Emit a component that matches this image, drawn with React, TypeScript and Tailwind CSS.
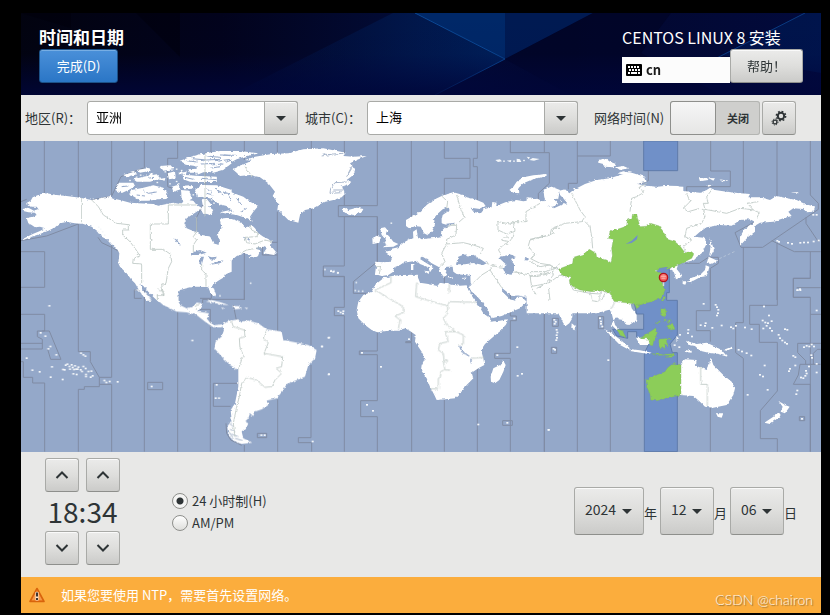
import { useState, type ReactNode } from "react";

const FONT = "font-['Noto_Sans_CJK_SC','Noto_Sans',sans-serif]";
const RAISED =
  "rounded-[3px] border border-[#a9aaa7] border-b-[#8e8f8c] bg-linear-to-b from-[#ebebea] via-[#dededc] to-[#cbcbc9] shadow-[inset_0_1px_0_#fafafa] text-[#2e3436]";

/* The map is drawn in tiles at three units per pixel; each tile has its own origin. */
function Tile({ x, y, children }: { x: number; y: number; children: ReactNode }) {
  return <g transform={`translate(${x} ${y}) scale(0.33333)`}>{children}</g>;
}

function Dots({ at, size = 5 }: { at: number[][]; size?: number }) {
  return (
    <>
      {at.map(([x, y], i) => (
        <rect key={i} x={x - size / 2} y={y - size / 2} width={size} height={size - 1} />
      ))}
    </>
  );
}

function SeaLines() {
  return (
    <g fill="none" stroke="#7f8ca4" strokeWidth="3">
      <Tile x={20} y={140}>
        <path d="M73,3V160M175,3V172M175,250V480M275,3V165M275,315V480M373,3V83L303,110L275,168L215,180M473,3V55H443V140L458,145M573,3V40M3,335H74V442H3M3,302L80,288L175,252M3,185L20,178M343,450V475H365M343,450H362M556,38V180L530,232V270M234,292L245,308L275,322L298,335" />
      </Tile>
      <Tile x={200} y={140}>
        <path d="M133,3V60M133,335V480M232,3V45M232,215V480M215,307H232M187,320V345H232M334,3V28M334,205V480M433,3V40M433,165V197M532,3V197H415V230H532V365M433,230V378H370V409H433V480M34,445V475H0" />
      </Tile>
      <Tile x={350} y={140}>
        <path d="M82,230V365L10,425V460H60M184,3V235M283,3V55H360V115H283V165M382,3V55H370V80H382V180M481,3V38H598V130L565,160V180M583,3V38M283,395V430" />
      </Tile>
      <Tile x={530} y={140}>
        <path d="M142,3V130H115V148M142,48H241V3M355,92V122L300,142" />
      </Tile>
      <Tile x={660} y={140}>
        <path d="M152,3V93H211V140H80V160M250,3V160M351,3V168M451,3V165L475,190V208L308,322H243L225,278L295,240M438,232V250L475,305M335,302L403,335H482M451,335V415H400V472H451M410,443H482M250,322V480M351,310V480M75,370H118L145,352H175V370L151,385V480" />
      </Tile>
      <Tile x={20} y={290}>
        <path d="M3,73H74V123H52V140L67,148V177H3M67,123H88L123,208H92L83,178M3,160H67M3,215H10V262H38V279H74V485M175,0V185H211V215L238,262H275V0M238,262V290H193V298H175V485M238,283H275V485M373,0V485M473,65V485M548,40V28H673V0M540,58H571V280V485M655,280H580V349H632M673,465V485M640,45L650,95M773,0V123M773,328V485M873,0V165M873,225V443H835V458H875V485M383,277H428V299H383ZM712,430H740V443H712ZM618,400L620,430L632,450L665,466" />
      </Tile>
      <Tile x={320} y={270}>
        <path d="M10,0V20H73V112H43V137H73V545M172,187V243H118V254H172V392H122V440H172V545M275,185V215H257V218H275V545M373,390V545M472,295V545M571,60V138H589V152H571V250H524V265H571V545M548,452H577V466H548ZM673,85V545M697,145H715V169H697ZM694,232H710V250H694Z" />
      </Tile>
      <Tile x={540} y={270}>
        <path d="M13,85V545M112,110V545M175,140H191V176H175ZM211,180V545M511,0V122H469V182H511V215M511,405V545M610,0V158H587V248L610,265V545M712,0V106H629V163H658V217H712V363L661,422V506H712V545M811,0V25H760V82H811V545M811,133H843M843,220H773V248L797,272V283M843,238H832L820,250V283M780,283H842M780,283L775,315L760,343H811V545M778,440H794V452H778Z" />
      </Tile>
    </g>
  );
}

function Highlight() {
  return (
    <g fill="#7090c8" stroke="#5f7baa" strokeWidth="3">
      <Tile x={530} y={140}>
        <path d="M341,3H443V92H341Z" />
      </Tile>
      <Tile x={540} y={270}>
        <path d="M388,-15V68H380V91H412V195L390,222L397,248H412V545H313V250L325,225L290,202V185H263V205L230,198L218,178H311V132H290L283,100L330,90L350,60L350,-25L370,-20Z" />
      </Tile>
    </g>
  );
}

function Land() {
  return (
    <g fill="#fff" filter="url(#coast)">
      <Tile x={20} y={140}>
        <path d="M8,207L25,203L42,212L55,207L50,200L32,200L18,190L32,182L38,172L60,163L80,160L110,165L140,168L180,173L215,180L240,175L272,168L275,175L300,180L330,188L355,190L400,192L415,197L440,192L460,188L480,192L500,180L520,182L530,195L545,203L530,215L515,225L500,235L493,250L500,265L525,275L545,285L570,290L580,310L595,315L600,300L590,285L605,265L600,240L610,235L635,235V395L612,405L600,415L590,425L580,432L575,440L585,455L588,465L580,468L572,455L565,442L550,440L520,440L500,445L480,450L475,460V485H415L400,470L385,455L370,438L362,432L365,450L380,465L395,482H380L360,455L345,430L335,420L320,400L300,380L295,370L298,340L290,325L275,315L260,298L245,290L235,275L215,260L190,252L165,250L140,246L120,250L105,262L85,272L60,282L35,290L10,300L8,297L40,281L60,273L75,265L60,260L45,262L35,255L25,250L20,235L40,230L50,225L45,218L25,217L10,213Z" />
        <path d="M297,128L340,128L345,138L330,148L304,160L286,150ZM335,150L370,143L400,136L430,143L442,160L440,177L415,178L385,182L360,182L345,172L328,162ZM310,105L340,96L352,102L320,112ZM350,90L388,84L392,92L360,98ZM340,118L370,110L410,103L422,116L390,125L350,125ZM443,100L465,94L467,115L447,118ZM420,78L452,76L462,88L430,92ZM455,140L475,134L482,148L460,155ZM483,150L507,152L517,175L500,190L485,178ZM488,104L540,108L590,110V125L550,126L510,125L490,118ZM480,62L520,48L570,38L635,33V70L610,90L580,98L550,92L540,80L500,74ZM525,150L545,135L590,136L635,150V172L600,168L560,174L530,165ZM545,178L560,176L575,195L560,205L548,195ZM475,98L500,95L498,103L480,104ZM505,88L535,86L540,98L510,98ZM378,104L400,98L395,110ZM540,205L570,205L578,218L550,222ZM412,118L436,114L434,122ZM490,137L518,135L520,146L495,148Z" />
      </Tile>
      <Tile x={200} y={140}>
        <path d="M65,240L80,233L105,240L125,250L140,265L155,255L165,265L175,280L190,290L205,297L215,305L213,318L230,338L222,345L190,340L200,325L190,320L160,325L180,330L172,350L145,355L155,345L130,340L110,348L85,370L80,385L70,400L75,410L62,418L50,425L40,430L35,440L45,460L40,468L30,455L25,440L0,440V285L30,290L40,312L55,315L62,300L50,285L65,265Z" />
        <path d="M-10,45L60,33L120,33L175,40L140,48L110,58L90,68L60,88L40,95L10,97L-10,105ZM-10,150L20,138L50,140L90,155L130,170L150,185L175,198L160,215L150,230L155,245L140,235L110,225L85,222L60,217L90,210L80,198L55,192L40,178L10,170L-10,172ZM5,200L20,195L40,210L30,225L10,218ZM-10,112L50,112L50,125L-10,125Z" />
        <path d="M98,88L120,78L155,62L135,60L165,50L215,42L265,40L310,28L370,25L437,38L430,48L460,50L500,48L470,60L450,70L465,90L460,105L440,120L455,130L425,140L437,160L425,172L400,180L370,187L340,205L315,210L300,225L295,248L285,245L265,240L245,220L232,210L235,190L218,168L225,155L205,130L180,112L150,105L120,108L110,98ZM425,208L440,204L445,210L470,203L490,207L485,217L460,225L435,218Z" />
      </Tile>
      <Tile x={350} y={140}>
        <path d="M90,265L105,262L112,270L108,280L120,292L130,305L145,312L130,320L98,322L110,315L100,308L110,302L95,285ZM67,295L80,287L93,292L88,308L68,312Z" />
        <path d="M75,365L100,367L120,365L127,350L105,335L120,332L125,326L145,322L160,308L178,298L190,295L189,275L200,268L203,290L215,298L240,295L265,293L277,290L273,275L285,262L300,258L275,250L275,238L278,225L300,210L290,203L278,208L262,222L248,240L255,255L245,275L232,285L222,280L212,260L195,258L180,267L168,258V240L185,230L210,215L230,195L250,180L275,168L290,162L310,157L340,165L350,172L375,178L400,188L407,198L390,207L362,203L370,215L390,220L400,208L425,202L427,186L440,188L438,198L470,185L500,180L520,184L545,180L538,172L565,178L570,187L600,177L640,195V480L600,478L585,475L560,468L520,470L505,465L485,468L470,455L455,443L455,455L470,475L480,482H400L365,440L375,405L360,407L320,402L310,395L308,380L290,380L283,390L292,405L280,410L272,395L265,380L245,370L230,358L218,350L210,357L230,370L250,382L240,397L235,382L210,372L200,362L180,365L160,368L150,375L133,382L130,395L115,405L95,408L75,402L78,380Z" />
        <path d="M590,103L588,108L550,117L520,130L505,145L508,160L490,158L478,150L490,140L500,125L520,112L550,106ZM580,150L605,140L630,150L622,190L600,200L585,175ZM293,411L310,412L308,416L293,415ZM335,415L350,412L345,417ZM238,394L222,392L236,402ZM183,372L190,372L190,390L183,390Z" />
      </Tile>
      <Tile x={530} y={140}>
        <path d="M-10,172L25,178L50,190L60,200L85,198L92,182L110,188L100,175L90,165L88,152L105,148L118,160L130,150L165,132L200,120L240,115L270,105L300,97L345,110L350,125L320,132L350,137L380,140L410,138L460,140V330L410,380L380,380L390,430L360,475L200,520H-10Z" />
        <path d="M205,60L225,54L240,65L258,72L250,82L225,80L220,72L205,68ZM258,82L280,78L295,85L270,90ZM262,100L280,94L300,98L290,106ZM0,110L48,102L50,107L0,120ZM40,150L65,140L75,150L80,185L45,182Z" />
      </Tile>
      <Tile x={660} y={140}>
        <path d="M-5,142L25,137L55,138L65,152L90,155L120,158L140,150L150,143L165,150L200,155L240,160L270,162L265,172L300,172L330,180L350,168L380,175L410,180L435,192L465,200L460,215L440,217L430,207L400,205L385,215L395,228L370,235L340,245L300,248L285,257L285,275L265,290L240,317V290L255,265L285,245L270,238L240,240L215,257L180,255L140,262L120,275L103,290L130,293L138,300L138,315L125,340L95,362L60,370L-5,310ZM28,387L55,372L50,387L60,400L65,412L48,418L42,397Z" />
        <path d="M148,295L155,308L162,330L152,348L148,345L152,320ZM146,350L172,362L155,372L140,370ZM137,376L148,380L145,392L140,408L120,412L100,422L80,425L95,413L120,405L135,390ZM68,424L80,424L76,434L68,432ZM85,424L97,420L93,428ZM116,112L140,112L145,120L120,124ZM145,114L165,115L160,122ZM178,118L205,122L190,124ZM138,134L158,136L145,140ZM393,158L416,156L410,161Z" />
      </Tile>
      <Tile x={20} y={290}>
        <path d="M380,-5H475V30L480,45L500,55L520,50L530,38L548,40L535,65L567,70L560,85L570,98L585,105L607,103L605,112L580,112L555,95L530,75L500,67L470,65L430,45L400,20ZM345,-2L365,-2L380,10L396,28L380,20L370,8ZM572,-5L582,-5L588,18L580,15ZM558,35L575,30L600,36L627,45L605,44L580,38ZM636,48L655,48L667,55L645,58ZM603,53L613,54L608,57ZM673,53L685,54L680,57Z" />
        <path d="M605,105L625,93L655,88L660,95L685,92L715,100L740,118L785,125L790,150L830,158L865,165L890,180L885,205L865,225L855,260L830,270L800,282L790,300L770,325L740,332L745,345L725,358L705,365L700,378L690,370L685,385L675,395L685,400L680,412L665,425L670,445L697,458L665,462L640,452L625,435L622,410L635,390L632,360L645,340L655,290V240L630,225L610,205L583,175L587,155L605,140L612,120Z" />
      </Tile>
      <Tile x={320} y={270}>
        <path d="M190,25L215,18L245,15L290,14L297,30L300,38L325,42L352,48L360,38L385,43L420,47L440,46L445,60L460,85L475,105L490,130L510,145L512,155L540,152L563,148L560,160L545,180L520,200L495,222L483,240L490,265L493,285L475,295L455,308L460,325L440,345L425,365L405,385L375,388L350,390L343,375L330,350L320,325L303,300L305,285L315,265L305,245L285,215L287,195L270,183L255,175L235,182L205,182L172,187L155,180L135,165L115,145L110,120L115,95L130,75L155,65L165,45ZM550,272L557,285L550,305L538,330L525,340L513,335L512,320L520,295L540,285Z" />
        <path d="M452,62L448,48L465,30L530,10L545,52L547,65L570,88L582,92L592,80L605,80L620,95L600,115L575,125L545,138L515,145L505,125L490,100L470,78ZM450,-5H725V128L712,125L708,100L695,103L680,85L635,78L575,76L560,62L545,50L480,40L452,40Z" />
      </Tile>
      <Tile x={540} y={270}>
        <path d="M-10,-5H300V80L285,93L272,102L275,115L290,135V150L268,165L256,162L250,150L236,148L228,142L222,150L225,165L238,178L230,180L215,165L220,150L215,130L208,118L195,120L183,105L175,95L150,95L140,100L120,110L97,125V145L88,160L78,167L70,160L55,130L45,100L30,95L20,80L-10,75ZM95,160L108,170L101,180L94,174Z" />
        <path d="M195,178L215,190L245,212L270,235L264,238L240,225L215,200ZM268,237L300,241L335,248L325,252L270,243ZM288,203L328,203L332,225L300,225ZM438,212L470,222L500,218L522,228L545,240L562,260L535,252L505,248L480,242L465,228L445,224ZM550,240L575,230L578,235L560,242ZM409,198L416,205L410,215ZM432,240L455,242L455,248L436,246Z" />
        <path d="M420,285L435,268L470,270L468,287L500,300L506,290L512,262L520,285L535,300L550,315L575,335L585,355L580,375L560,405L520,413L495,410L480,395L474,390L460,378L420,375ZM528,430L550,430L545,443L533,440ZM715,392L735,405L749,410L735,430L722,425L728,410ZM716,429L722,438L690,462L673,458L700,440Z" />
      </Tile>
    </g>
  );
}

function SmallIslands() {
  return (
    <g fill="#f4f7fa">
      <Tile x={20} y={290}>
        <Dots
          size={6}
          at={[[62, 129], [76, 139], [91, 170], [85, 177], [109, 195], [20, 205], [37, 241], [59, 246], [92, 262], [96, 231], [129, 239], [128, 269], [88, 48], [183, 190], [190, 195], [196, 199], [253, 272], [259, 278], [269, 275], [293, 276], [395, 290], [590, 285], [587, 325], [597, 325], [517, 152], [927, 143], [906, 170], [926, 254], [724, 436], [734, 436], [878, 455]]}
        />
        <Dots
          size={6}
          at={[[137, 226], [142, 223], [148, 230], [155, 225], [158, 233], [165, 228], [168, 238], [175, 232], [182, 240], [190, 230], [186, 245], [197, 236], [205, 245], [160, 252], [170, 254], [198, 254], [198, 260], [212, 262], [218, 258], [150, 238], [173, 238], [214, 244], [134, 240], [162, 239]]}
        />
      </Tile>
      <Tile x={20} y={140}>
        <Dots at={[[428, 82], [436, 96], [470, 88], [485, 92], [350, 112], [362, 106], [412, 128], [470, 125], [476, 132], [450, 132], [330, 122], [520, 165], [575, 180], [582, 190], [236, 262], [242, 268], [248, 276], [238, 280], [254, 286]]} />
      </Tile>
      <Tile x={200} y={140}>
        <Dots at={[[152, 430], [375, 389], [394, 393], [402, 394], [413, 399], [469, 428], [466, 452], [476, 454], [488, 454], [60, 468]]} />
      </Tile>
      <Tile x={320} y={270}>
        <Dots
          size={6}
          at={[[55, 124], [62, 128], [69, 131], [70, 124], [26, 204], [6, 230], [27, 313], [126, 249], [183, 291], [141, 405], [159, 423], [267, 208], [583, 146], [592, 232], [532, 256], [593, 318], [606, 312], [475, 464], [562, 459], [686, 480], [703, 150], [707, 156], [704, 162], [701, 237], [705, 240], [710, 180], [712, 188], [710, 196], [711, 204], [709, 211], [33, 4], [40, 6], [54, 9]]}
        />
      </Tile>
      <Tile x={540} y={270}>
        <Dots
          size={6}
          at={[[491, 102], [527, 105], [531, 112], [535, 120], [534, 130], [531, 137], [482, 166], [497, 160], [495, 168], [517, 174], [545, 167], [573, 172], [580, 176], [588, 168], [615, 173], [635, 178], [672, 110], [687, 137], [668, 152], [676, 158], [684, 160], [695, 154], [680, 168], [690, 175], [696, 183], [670, 176], [735, 178], [742, 180], [716, 195], [720, 205], [727, 212], [735, 218], [741, 222], [830, 122], [445, 180], [444, 190], [456, 200], [420, 195], [404, 226], [418, 232], [596, 240], [606, 245], [620, 250], [634, 257], [660, 315], [669, 320], [674, 287], [683, 360], [623, 375], [772, 362], [769, 373], [786, 447], [760, 258], [766, 262], [750, 297], [747, 304], [766, 287], [792, 232], [800, 228], [808, 230], [815, 224], [822, 230], [814, 256], [816, 264], [830, 282], [798, 303], [800, 311], [796, 318], [790, 325], [783, 323], [830, 308], [807, 290], [26, 480], [205, 271], [180, 145], [183, 155], [187, 170], [183, 162], [780, 58], [773, 61]]}
        />
      </Tile>
      <Tile x={660} y={140}>
        <Dots
          size={6}
          at={[[352, 303], [357, 306], [384, 309], [396, 312], [421, 309], [432, 308], [444, 308], [461, 305], [476, 302], [460, 225], [470, 225], [412, 451], [421, 451]]}
        />
        <path d="M178,356L225,334" fill="none" stroke="#c3cede" strokeWidth="2" strokeDasharray="8 6" />
      </Tile>
      <Tile x={350} y={140}>
        <path d="M436,60L450,58L456,64L444,66ZM470,62L484,60L482,67ZM500,56L510,58L514,66L500,66ZM530,50L540,52L536,58ZM538,60L548,54L569,57L552,62Z" />
        <Dots at={[[462, 64], [492, 64], [522, 62], [124, 250]]} />
      </Tile>
    </g>
  );
}

function InlandWater() {
  return (
    <g fill="#94a8c9" filter="url(#coast)">
      <Tile x={20} y={140}>
        <path d="M510,345L525,334L540,330L560,338L535,345ZM540,350L552,350L545,375L538,372ZM562,348L575,352L592,350L575,362ZM568,375L590,366L614,360L600,370ZM463,295L472,300L482,318L474,313Z" />
        <path
          d="M500,62L530,66M515,56L560,60M545,72L585,70M560,48L600,52M590,64L630,58M570,85L600,80M545,115L590,119M560,145L575,160M585,142L600,155M370,150L385,160L410,156M350,165L375,168M610,156L630,162M495,112L520,118M305,140L325,138M385,115L400,112M612,45L630,47"
          fill="none"
          stroke="#94a8c9"
          strokeWidth="3"
        />
      </Tile>
      <Tile x={200} y={140}>
        <path d="M20,60L60,58M30,75L70,72M60,45L110,46M95,60L75,68M50,150L70,165M80,160L95,180M110,175L125,195M125,215L140,205M70,200L100,215M20,160L40,165M130,292L150,300" fill="none" stroke="#94a8c9" strokeWidth="3" />
        <path d="M365,48L400,42L430,40M398,45L368,42M460,70L445,100M455,85L440,110M440,126L405,128L392,145L390,160L425,158M400,150L430,150" fill="none" stroke="#a9b7cc" strokeWidth="3" />
      </Tile>
      <Tile x={350} y={140}>
        <path d="M318,373L325,350L345,342L352,350L370,344L395,360L410,370L400,375L370,369L345,373ZM445,352L485,343L497,352L480,358L492,372V395L480,405L465,400L458,383L470,375ZM523,357L530,352L534,358L528,362ZM289,251L315,248L312,255L290,256ZM288,390L305,386L305,400L292,400Z" />
      </Tile>
      <Tile x={530} y={140}>
        <path d="M50,196L68,200L85,192L72,178L82,176L92,186L105,182L112,190L95,194L72,205Z" />
      </Tile>
      <Tile x={320} y={270}>
        <path d="M419,228L426,245L448,258M452,264L454,280" fill="none" stroke="#94a8c9" strokeWidth="4" />
      </Tile>
      <Tile x={20} y={290}>
        <path d="M628,400L640,410M630,418L645,425M634,432L655,440M645,445L668,452M626,425L640,445" fill="none" stroke="#a9b7cc" strokeWidth="3" />
      </Tile>
    </g>
  );
}

function SelectedZone() {
  return (
    <>
      <g fill="#8ccd59" stroke="#7dab6a" strokeWidth="1">
        <g filter="url(#coast)">
          <Tile x={530} y={140}>
            <path d="M85,388L110,378L128,370L130,352L160,343L178,328L198,340L200,352L230,360L243,368L247,345L245,325L250,298L235,295L240,275L280,262L290,255L292,240L305,235L308,222L320,222L326,245L330,260L355,258L362,250L388,258L400,275L412,298L435,305L450,318L465,338L485,335L492,342L485,355L465,365L440,377L412,388L405,382L385,385L378,393L395,400L402,402L390,418L400,435L406,448L400,462L388,475L365,485L345,490L325,496L300,490L275,487L252,484L240,460L220,452L185,455L150,450L120,435L118,420L125,410L100,408L90,395ZM400,470L404,468L400,483L394,482Z" />
          </Tile>
          <Tile x={540} y={270}>
            <path d="M285,104L298,102L298,110L290,116ZM232,178L248,182L258,203L240,196ZM300,205L335,182L347,174L352,188L342,210L338,227L328,225L328,208ZM357,208L395,204L378,212L384,227L374,222L376,236L366,230L362,238L356,226ZM363,116L377,114L378,130L372,142L362,134ZM372,146L380,150L374,154ZM385,148L392,152L386,160ZM380,168L398,160L405,178L392,180ZM345,163L360,152L361,155ZM335,251L370,253L400,251L400,256L350,256ZM375,262L405,252L395,262Z" />
            <path d="M318,330L350,315L375,305L383,293L400,280L423,285V375L385,384L350,392L332,390L330,372L320,350Z" />
          </Tile>
        </g>
      </g>
      <Tile x={530} y={140}>
        <path d="M287,312L305,302L323,285L321,298L305,309Z" fill="#7090c8" />
      </Tile>
    </>
  );
}

function LandLines() {
  return (
    <g fill="none" stroke="#bcc7c3" strokeWidth="2.500" filter="url(#coast)">
      <Tile x={20} y={140}>
        <path d="M184,173V250M215,180L235,200L250,225L290,250L325,254V270H308V285L330,305L345,325L360,348L340,355L338,370L365,372V430M530,195H445V252H391V297L397,300L391,305V328H430L452,343L455,365L445,385L438,430L425,432L430,465H412V480M530,232V275L520,290L530,300L520,315V335M545,370V390L558,402V440" />
      </Tile>
      <Tile x={200} y={140}>
        <path d="M150,255L155,270L175,280L170,290L135,292L140,308L165,312L195,300L215,305M135,80L155,108M120,340L140,330L185,322M15,40V230" />
      </Tile>
      <Tile x={350} y={140}>
        <path d="M78,380H92L88,402M290,260L305,256H320L318,285L290,298V312L340,308L370,315L400,325L390,345M290,312L275,340L285,365L270,380M275,168L293,185L290,205M320,165L330,200L343,232L325,248M444,245L480,252L490,248L495,270L490,290L478,305L455,300L460,290L475,292M444,245V270L470,282L492,275M478,305L460,315L445,330L455,345M480,245H528V215L570,190M630,265H610V280L580,290L540,300L535,318L555,345L540,355L570,370L600,375L625,390M410,370L430,378L460,382M430,378L420,390L440,420L455,443M420,390L395,405L370,430M490,395L540,405L560,410L600,400L630,370M540,405L545,445L560,465M560,445L590,430L610,405L605,380" />
      </Tile>
      <Tile x={530} y={140}>
        <path d="M125,160L140,190L150,210L165,230L155,245L105,250L65,265L60,285L0,298M165,245L180,260L185,290L188,325M350,130L330,140L340,158L320,170L305,175L300,215M0,365L30,380L60,375L85,388M0,395L50,395L70,385M0,410L50,400M0,440L55,430L90,405L110,412M120,430L130,450L180,460L210,462L215,452M55,440L60,480M215,480L225,460L245,455" />
      </Tile>
      <Tile x={660} y={140}>
        <path d="M80,160L90,185L70,205L85,215L120,205L132,210L135,230L125,250L80,265L75,290L95,300L70,320L78,335M155,150L140,170L145,190L130,190L135,208L200,220L240,205L260,207L280,210L262,190L295,185M280,210L298,218L290,235" />
      </Tile>
      <Tile x={20} y={290}>
        <path d="M655,240L665,205L673,200L660,175L658,145L675,140L673,120L640,110L635,95M740,120L730,145L745,158L732,190L788,200L785,230L768,235L785,250L765,270L755,290L735,292L710,270L680,262L665,280L658,320L650,350L640,400L645,440M412,0L432,5V15L410,15M540,40L525,50L530,60" />
      </Tile>
      <Tile x={320} y={270}>
        <path d="M213,18V38L165,60L250,110V128L225,138L240,150L235,178M290,38L287,80L320,90L383,108V130L370,145L380,165L408,185L375,185L385,215L360,220L355,240L370,250L372,270H382V275H370L375,300H390M372,300L362,305V320L355,325V357L330,356M388,45V68M383,108L388,95L470,97M408,185L430,195V220L418,225M452,265L493,262" />
      </Tile>
      <Tile x={540} y={270}>
        <path d="M482,290V343H502V408M150,65L155,92L175,95M180,75L178,95M215,115L225,95" />
      </Tile>
    </g>
  );
}

function WorldMap() {
  return (
    <svg viewBox="21 141 800 311" className="block w-full bg-[#94a8c9]" role="img" aria-label="时区地图">
      <defs>
        <filter id="coast" x="0" y="0" width="100%" height="100%" colorInterpolationFilters="sRGB">
          <feTurbulence type="fractalNoise" baseFrequency="0.3" numOctaves="2" seed="4" result="n" />
          <feDisplacementMap in="SourceGraphic" in2="n" scale="3" xChannelSelector="R" yChannelSelector="G" />
        </filter>
        <radialGradient id="pin" cx="0.5" cy="0.35" r="0.6">
          <stop offset="0" stopColor="#ff9a94" />
          <stop offset="1" stopColor="#ee4a4a" />
        </radialGradient>
      </defs>
      <SeaLines />
      <Highlight />
      <Land />
      <SmallIslands />
      <InlandWater />
      <SelectedZone />
      <LandLines />
      <path d="M663.500,281V286" stroke="#d8d8d8" strokeWidth="1.500" />
      <circle cx="663.500" cy="277.500" r="4.200" fill="url(#pin)" stroke="#b3141c" strokeWidth="1.200" />
      <path d="M661,276.500H666M661.500,278.500H665.500" stroke="#f9b5b2" strokeWidth="0.700" />
    </svg>
  );
}

function HeaderArt() {
  return (
    <svg viewBox="0 0 800 82" preserveAspectRatio="none" className="absolute inset-0 h-full w-full" aria-hidden="true">
      <defs>
        <linearGradient id="base" x1="0" x2="1">
          <stop offset="0" stopColor="#02030f" />
          <stop offset="0.25" stopColor="#02031c" />
          <stop offset="0.5" stopColor="#020c38" />
          <stop offset="0.65" stopColor="#02072c" />
          <stop offset="1" stopColor="#020a3c" />
        </linearGradient>
        <linearGradient id="fade" x1="0" x2="0" y1="0" y2="1">
          <stop offset="0" stopColor="#000640" stopOpacity="0" />
          <stop offset="0.5" stopColor="#000640" stopOpacity="0.05" />
          <stop offset="1" stopColor="#00063a" stopOpacity="0.85" />
        </linearGradient>
        <linearGradient id="beam" x1="0" x2="1">
          <stop offset="0" stopColor="#011040" stopOpacity="0.2" />
          <stop offset="1" stopColor="#00205a" />
        </linearGradient>
      </defs>
      <rect width="800" height="82" fill="url(#base)" />
      <path d="M50,0H159V44L115,0ZM0,0H50L50,15Z" fill="#00000a" opacity="0.5" />
      <path d="M210,82L372,0H394L484,46L414,82Z" fill="url(#beam)" />
      <path d="M394,0H484V46Z" fill="#002868" />
      <path d="M484,0H572L484,46Z" fill="#001a52" />
      <path d="M572,0L484,46L550,82H700L620,40L650,0Z" fill="#010425" opacity="0.7" />
      <path d="M784,0L700,42L800,60V0Z" fill="#001852" opacity="0.7" />
      <path d="M394,0L484,46L414,82" fill="none" stroke="#0a4894" strokeWidth="1" />
      <path d="M784,0L690,48" stroke="#0a3a80" strokeWidth="1" />
      <rect width="800" height="82" fill="url(#fade)" />
    </svg>
  );
}

function Caret() {
  return (
    <svg viewBox="0 0 10 5" className="h-[5px] w-[10px]" aria-hidden="true">
      <path d="M0,0H10L5,5Z" fill="#2e3436" />
    </svg>
  );
}

function Combo({ id, value }: { id: string; value: string }) {
  return (
    <div className="relative h-[34px] min-w-0 flex-1">
      <select
        id={id}
        className="h-full w-full appearance-none rounded-[3px] border border-[#a9aaa7] bg-white pr-10 pb-[3px] pl-2 text-[13px] text-black"
      >
        <option>{value}</option>
      </select>
      <span className={`pointer-events-none absolute inset-y-0 right-0 flex w-[34px] items-center justify-center rounded-l-none ${RAISED}`}>
        <Caret />
      </span>
    </div>
  );
}

function DatePart({ id, value, unit, wide }: { id: string; value: string; unit: string; wide?: boolean }) {
  return (
    <div className="flex items-center">
      <div className={`relative h-12 ${wide ? "w-[70px]" : "w-[54px]"}`}>
        <select id={id} className={`h-full w-full appearance-none pr-5 pb-[3px] pl-[10px] text-[14px] ${RAISED}`}>
          <option>{value}</option>
        </select>
        <span className="pointer-events-none absolute inset-y-0 right-3 flex items-center">
          <Caret />
        </span>
      </div>
      <label htmlFor={id} className="w-4 pt-[3px] text-[13px] text-[#2e3436]">
        {unit}
      </label>
    </div>
  );
}

function Step({ dir, label, onClick }: { dir: "up" | "down"; label: string; onClick: () => void }) {
  return (
    <button type="button" aria-label={label} onClick={onClick} className={`flex h-[34px] w-[34px] items-center justify-center ${RAISED}`}>
      <svg viewBox="0 0 14 10" className="h-[10px] w-[14px]" fill="none" stroke="#2e3436" strokeWidth="2" aria-hidden="true">
        <path d={dir === "up" ? "M1.500,8L7,2.500L12.500,8" : "M1.500,2L7,7.500L12.500,2"} />
      </svg>
    </button>
  );
}

function Radio({ label, checked, onChange }: { label: string; checked: boolean; onChange: () => void }) {
  return (
    <label className="flex h-[22px] items-center gap-1 text-[13px] text-[#2e3436]">
      <input
        type="radio"
        name="format"
        checked={checked}
        onChange={onChange}
        className={`h-4 w-4 appearance-none rounded-full border border-[#8e8f8c] ${
          checked ? "bg-[radial-gradient(circle,#2e3436_0px,#2e3436_3px,#f6f6f5_4px,#f0f0ef_8px)]" : "bg-linear-to-b from-white to-[#dededc]"
        }`}
      />
      {label}
    </label>
  );
}

function KeyboardIcon() {
  return (
    <svg viewBox="0 0 16 12" className="h-3 w-4" aria-hidden="true">
      <rect width="16" height="12" rx="1" fill="#000" />
      <path
        d="M2,2h2v2h-2zM5,2h2v2h-2zM8,2h2v2h-2zM11,2h2v2h-2zM3,5h2v2h-2zM6,5h2v2h-2zM9,5h2v2h-2zM12,5h2v2h-2zM2,8h2v2h-2zM5,8h6v2h-6zM12,8h2v2h-2z"
        fill="#fff"
      />
    </svg>
  );
}

function GearsIcon() {
  return (
    <svg viewBox="0 0 16 16" className="h-4 w-4" fill="none" stroke="#2e3436" aria-hidden="true">
      <circle cx="10" cy="6" r="3.200" strokeWidth="2" />
      <circle cx="10" cy="6" r="4.700" strokeWidth="1.400" strokeDasharray="1.850 1.840" />
      <circle cx="4" cy="12" r="1.900" strokeWidth="1.300" />
      <circle cx="4" cy="12" r="3" strokeWidth="1" strokeDasharray="1.200 1.156" />
    </svg>
  );
}

function WarningIcon() {
  return (
    <svg viewBox="0 0 16 16" className="h-4 w-4" aria-hidden="true">
      <path d="M8,1.500L15,14.500H1Z" fill="#f08024" stroke="#d8640c" strokeWidth="1.600" strokeLinejoin="round" />
      <path d="M8,3.200L13,13H3Z" fill="#f59a4a" />
      <path d="M6.500,5H9.500V13.500H6.500Z" fill="#fde6cf" />
      <path d="M7,5.500H9V9.500H7ZM7,11H9V13H7Z" fill="#3c3632" />
    </svg>
  );
}

export default function App() {
  const [hour, setHour] = useState(18);
  const [minute, setMinute] = useState(34);
  const [is24, setIs24] = useState(true);
  const [ntp, setNtp] = useState(false);
  const pad = (n: number) => String(n).padStart(2, "0");
  const shownHour = is24 ? hour : hour % 12 || 12;

  return (
    <div className={`min-h-screen bg-black pt-[13px] pr-[9px] pb-[2px] pl-[21px] ${FONT}`}>
      <header className="relative h-[82px] overflow-hidden">
        <HeaderArt />
        <div className="relative flex items-start justify-between px-[18px] pt-3">
          <div>
            <h1 className="h-6 text-[17px] leading-6 font-bold text-white">时间和日期</h1>
            <button
              type="button"
              className="h-[34px] w-[79px] rounded-[3px] border border-[#1c5187] bg-linear-to-b from-[#4a90d9] to-[#2a76c6] text-[13px] text-white shadow-[inset_0_1px_0_#77aee4]"
            >
              完成(D)
            </button>
          </div>
          <div>
            <p className="h-6 text-[16px] leading-6 text-white">CENTOS LINUX 8 安装</p>
            <div className="flex items-end">
              <div className="flex h-[26px] w-[108px] items-center gap-1 bg-[#fcfcfc] pl-1 text-[13px] font-bold text-[#1a1a1a]">
                <KeyboardIcon />
                cn
              </div>
              <button type="button" className={`h-[34px] w-[73px] text-[13px] ${RAISED}`}>
                帮助！
              </button>
            </div>
          </div>
        </div>
      </header>

      <main className="bg-[#e8e8e7]">
        <div className="flex h-[46px] items-center pr-[25px] pl-1 text-[13px] text-[#2e3436]">
          <label htmlFor="region" className="w-[62px] shrink-0 whitespace-nowrap">
            地区(R)：
          </label>
          <Combo id="region" value="亚洲" />
          <label htmlFor="city" className="w-[69px] shrink-0 pl-[7px] whitespace-nowrap">
            城市(C)：
          </label>
          <Combo id="city" value="上海" />
          <label htmlFor="ntp" className="w-[92px] shrink-0 pl-4 whitespace-nowrap">
            网络时间(N)
          </label>
          <label
            htmlFor="ntp"
            className={`flex h-[34px] w-[90px] shrink-0 items-stretch rounded-[3px] bg-[#cfcfcd] text-[11px] font-bold shadow-[inset_0_0_0_1px_#b4b5b2] ${ntp ? "flex-row-reverse" : ""}`}
          >
            <input id="ntp" type="checkbox" role="switch" checked={ntp} onChange={() => setNtp(!ntp)} className="sr-only" />
            <span className="w-[46px] rounded-[3px] border border-[#8e8f8c] bg-linear-to-b from-[#f6f6f6] to-[#e6e6e5]" />
            <span className="flex flex-1 items-center justify-center">{ntp ? "打开" : "关闭"}</span>
          </label>
          <button type="button" aria-label="配置 NTP" className={`ml-[2px] flex h-[34px] w-[34px] shrink-0 items-center justify-center ${RAISED}`}>
            <GearsIcon />
          </button>
        </div>

        <WorldMap />

        <div className="flex h-[125px] items-start pt-[6px] pr-[21px] pl-6">
          <div className="flex w-[75px] flex-col">
            <div className="flex justify-between">
              <Step dir="up" label="增加小时" onClick={() => setHour((hour + 1) % 24)} />
              <Step dir="up" label="增加分钟" onClick={() => setMinute((minute + 1) % 60)} />
            </div>
            <p className="h-[39px] text-center text-[28px] leading-[39px] text-[#2e3436]">
              {pad(shownHour)}:{pad(minute)}
            </p>
            <div className="flex justify-between">
              <Step dir="down" label="减少小时" onClick={() => setHour((hour + 23) % 24)} />
              <Step dir="down" label="减少分钟" onClick={() => setMinute((minute + 59) % 60)} />
            </div>
          </div>
          <fieldset className="ml-[52px] pt-8">
            <Radio label="24 小时制(H)" checked={is24} onChange={() => setIs24(true)} />
            <Radio label="AM/PM" checked={!is24} onChange={() => setIs24(false)} />
          </fieldset>
          <div className="ml-auto flex pt-[29px]">
            <DatePart id="year" value="2024" unit="年" wide />
            <DatePart id="month" value="12" unit="月" />
            <DatePart id="day" value="06" unit="日" />
          </div>
        </div>
      </main>

      <footer className="flex h-9 items-center bg-[#fbad3d] px-2 text-[13px] text-white">
        <WarningIcon />
        <p className="pl-4">如果您要使用 NTP，需要首先设置网络。</p>
        <p className="ml-auto pt-2 font-['Lato',sans-serif] text-[14px] font-light text-white/90 [text-shadow:1px_1px_1px_#8a6a3a]">CSDN @chairon</p>
      </footer>
    </div>
  );
}
